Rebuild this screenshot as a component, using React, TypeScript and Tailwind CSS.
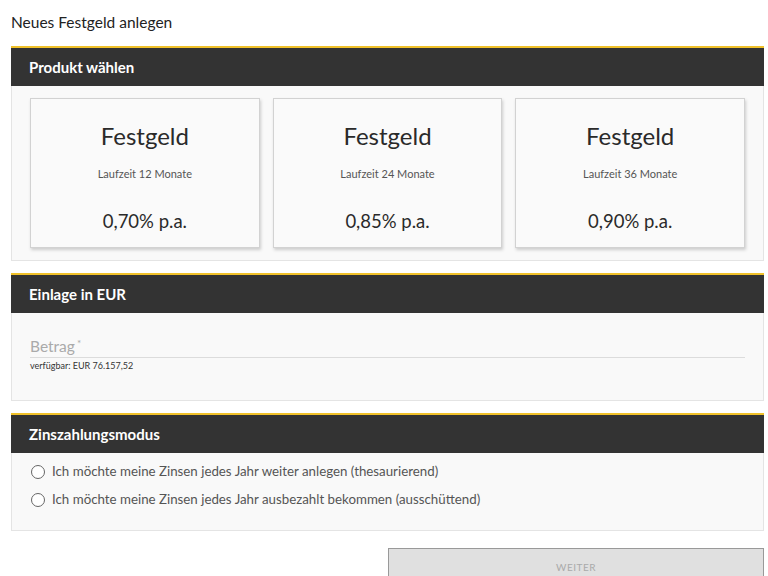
import React from 'react';

const products = [
    { months: 12, rate: '0,70% p.a.' },
    { months: 24, rate: '0,85% p.a.' },
    { months: 36, rate: '0,90% p.a.' },
];

const SectionHeader: React.FC<{ title: string }> = ({ title }) => (
    <div className="h-[40px] bg-[#333333] border-t-2 border-[#f0c12a] flex items-center px-[18px]">
        <span className="text-white text-[15px] font-bold">{title}</span>
    </div>
);

export default function App() {
    return (
        <div
            className="w-[768px] h-[576px] overflow-hidden bg-white text-[#333]"
            style={{ fontFamily: 'Lato, "Noto Sans", sans-serif' }}
        >
            <div className="ml-[11px] w-[753px]">
                <h1 className="h-[46px] pt-[12px] text-[15.5px] leading-[20px] text-[#222]">Neues Festgeld anlegen</h1>

                {/* Produkt wählen */}
                <SectionHeader title="Produkt wählen" />
                <div className="bg-[#f9f9f9] border border-t-0 border-[#e4e4e4] px-[18px] py-[12px] flex gap-[13px]">
                    {products.map((p) => (
                        <div
                            key={p.months}
                            className="w-[230px] h-[150px] bg-[#fafafa] border border-[#d2d2d2] shadow-[1px_2px_3px_rgba(0,0,0,0.18)] flex flex-col items-center"
                        >
                            <div className="mt-[22px] text-[24px] leading-[30px] text-[#2a2a2a]">Festgeld</div>
                            <div className="mt-[16px] text-[11px] leading-[14px] text-[#555]">Laufzeit {p.months} Monate</div>
                            <div className="mt-[28px] text-[18.5px] leading-[24px] text-[#2a2a2a]">{p.rate}</div>
                        </div>
                    ))}
                </div>

                {/* Einlage */}
                <div className="mt-[12px]">
                    <SectionHeader title="Einlage in EUR" />
                    <div className="h-[88px] bg-[#f9f9f9] border border-t-0 border-[#e4e4e4] px-[18px] pt-[24px]">
                        <div className="border-b border-[#dcdcdc] pb-[1px] text-[15.5px] leading-[19px] text-[#aaa]">
                            Betrag<sup className="text-[10px] ml-[2px]">*</sup>
                        </div>
                        <div className="mt-[2px] text-[9px] leading-[11px] text-[#333]">verfügbar: EUR 76.157,52</div>
                    </div>
                </div>

                {/* Zinszahlungsmodus */}
                <div className="mt-[12px]">
                    <SectionHeader title="Zinszahlungsmodus" />
                    <div className="h-[78px] bg-[#f9f9f9] border border-t-0 border-[#e4e4e4] px-[19px] pt-[10px] flex flex-col gap-[10px]">
                        {[
                            'Ich möchte meine Zinsen jedes Jahr weiter anlegen (thesaurierend)',
                            'Ich möchte meine Zinsen jedes Jahr ausbezahlt bekommen (ausschüttend)',
                        ].map((label) => (
                            <label key={label} className="flex items-center gap-[7px] h-[18px]">
                                <span className="w-[14px] h-[14px] rounded-full border-[1.5px] border-[#666] bg-white" />
                                <span className="text-[13.3px] text-[#555]">{label}</span>
                            </label>
                        ))}
                    </div>
                </div>

                <div className="mt-[17px] flex justify-end">
                    <button className="w-[376px] h-[38px] bg-[#e0e0e0] border border-[#999] text-[10px] tracking-[0.5px] text-[#aaa]">
                        WEITER
                    </button>
                </div>
            </div>
        </div>
    );
}
